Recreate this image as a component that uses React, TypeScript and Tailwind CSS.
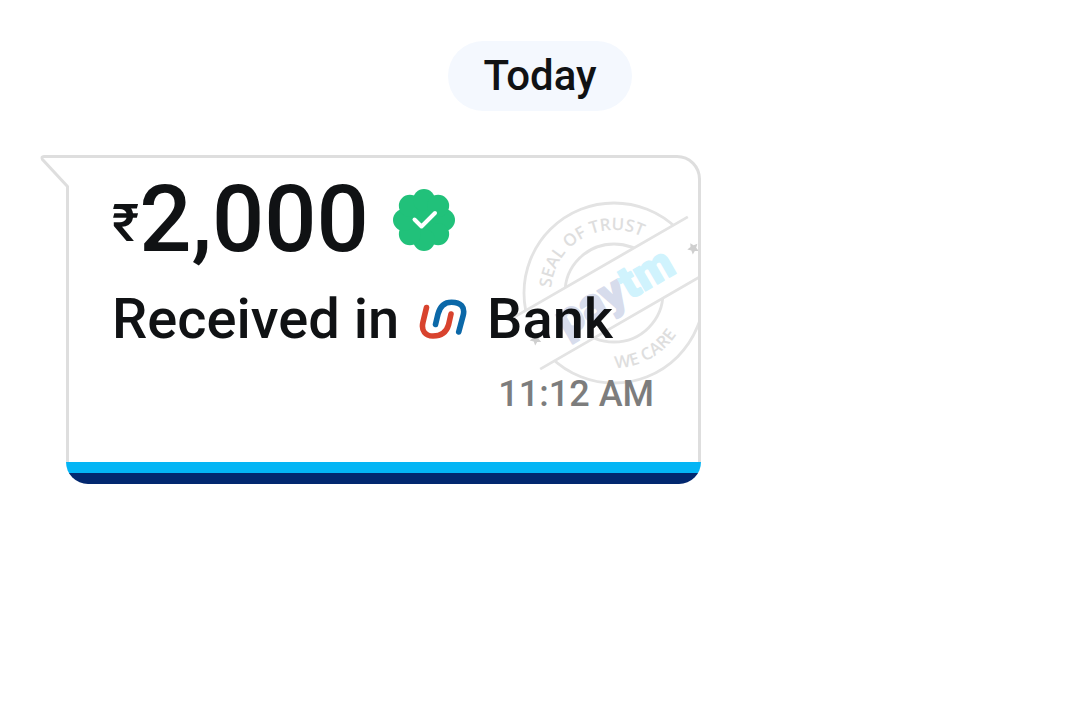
const bumps = [0, 45, 90, 135, 180, 225, 270, 315];

function VerifiedBadge() {
  return (
    <svg viewBox="-31 -31 62 62" className="size-[62px] shrink-0" role="img" aria-label="Verified">
      <g fill="#21c17a">
        <circle r="25.5" />
        {bumps.map((angle) => (
          <circle key={angle} cx="20" r="11" transform={`rotate(${angle})`} />
        ))}
      </g>
      <path
        d="M-9.5-.5-2.5 6.500 11-7"
        fill="none"
        stroke="#fff"
        strokeWidth="4"
        strokeLinecap="round"
        strokeLinejoin="round"
      />
    </svg>
  );
}

function UnionBankLogo() {
  return (
    <svg viewBox="0 0 48 40" className="h-10 w-12 shrink-0" role="img" aria-label="Union Bank">
      <g fill="none" strokeWidth="5.6" strokeLinecap="round">
        <path
          d="M7.500 8.500 4 23C1.800 32 6.500 37 14 37c8 0 13.500-4 15.500-11l2.500-11"
          stroke="#d8432e"
        />
        <path
          d="M16.500 25.500 19 15C21 7 25.500 3.200 32.500 3.200c9.500 0 13.700 5 11.700 13L39.700 33"
          stroke="#0b68a8"
        />
      </g>
    </svg>
  );
}

function TrustSeal() {
  return (
    <svg viewBox="-104 -95 208 190" className="absolute top-10 -right-5 h-[190px] w-[208px]" aria-hidden="true">
      <defs>
        <path id="seal-top" d="M-63 0A63 63 0 0 1 63 0" />
        <path id="seal-bottom" d="M-75 0A75 75 0 0 0 75 0" />
      </defs>
      <g fill="none" stroke="#e3e3e3" strokeWidth="2.8">
        <circle r="90" />
        <circle r="49" />
      </g>
      <g transform="rotate(-30)">
        <rect x="-96" y="-29" width="200" height="58" fill="#fff" />
        <path d="M-102-29H102M-102 29H102" stroke="#e3e3e3" strokeWidth="2.8" />
        <g fill="#cfcfcf">
          <path d="m91-5 1.800 3.500 4 .6-3 2.800.7 4.100-3.500-2-3.500 2 .7-4.100-3-2.800 4-.6z" />
          <path d="m-91-5 1.800 3.500 4 .6-3 2.800.7 4.100-3.500-2-3.500 2 .7-4.100-3-2.800 4-.6z" />
        </g>
        <text
          x="1"
          y="14"
          textAnchor="middle"
          className="font-['Roboto',sans-serif] text-[46px] font-black"
          strokeWidth="1.5"
          strokeLinejoin="round"
        >
          <tspan fill="#d7dcec" stroke="#d7dcec">pay</tspan>
          <tspan fill="#d0f3fd" stroke="#d0f3fd">tm</tspan>
        </text>
      </g>
      <g className="font-['Open_Sans',sans-serif] text-[17px] font-semibold" fill="#dedede">
        <text>
          <textPath href="#seal-top" startOffset="5">SEAL OF TRUST</textPath>
        </text>
        <text>
          <textPath href="#seal-bottom" startOffset="119">WE CARE</textPath>
        </text>
      </g>
    </svg>
  );
}

function BubbleTail() {
  return (
    <svg viewBox="0 0 40 34" className="absolute -top-[3px] -left-[29px] h-[34px] w-10" aria-hidden="true">
      <path d="M3 1.500H40V34H26z" fill="#fff" />
      <path
        d="M40 1.500H4Q1 1.500 2.500 4.500L27.500 31.500V34"
        fill="none"
        stroke="#dedede"
        strokeWidth="3"
        strokeLinejoin="round"
      />
    </svg>
  );
}

export default function App() {
  return (
    <main className="min-h-screen bg-white px-10 pt-[41px] font-['Roboto',sans-serif] font-medium text-[#101214]">
      <header className="flex justify-center">
        <time className="rounded-full bg-[#f4f8fe] px-[35px] py-[11px] text-[42px] leading-[48px]">Today</time>
      </header>

      <article className="relative mt-11 ml-[26px] w-[635px] max-w-full">
        <div className="relative rounded-tr-3xl border-x-3 border-t-3 border-[#dedede] pb-[46px]">
          <div className="absolute inset-0 overflow-hidden rounded-tr-3xl">
            <TrustSeal />
          </div>
          <BubbleTail />
          <div className="relative pt-1 pr-11 pl-[43px]">
            <div className="flex items-center gap-6">
              <p className="flex items-center leading-[108px]">
                <span className="pt-2 text-[52px]">₹</span>
                <span className="text-[92px]">2,000</span>
              </p>
              <VerifiedBadge />
            </div>
            <p className="flex items-center text-[56px] leading-[82px]">
              Received in
              <span className="mx-5">
                <UnionBankLogo />
              </span>
              Bank
            </p>
            <p className="mt-3 text-right text-[36px] leading-[44px] text-[#7d7d7d]">11:12 AM</p>
          </div>
        </div>
        <div className="overflow-hidden rounded-b-3xl">
          <div className="h-[11px] bg-[#04b5f5]" />
          <div className="h-[11px] bg-[#02286f]" />
        </div>
      </article>
    </main>
  );
}
